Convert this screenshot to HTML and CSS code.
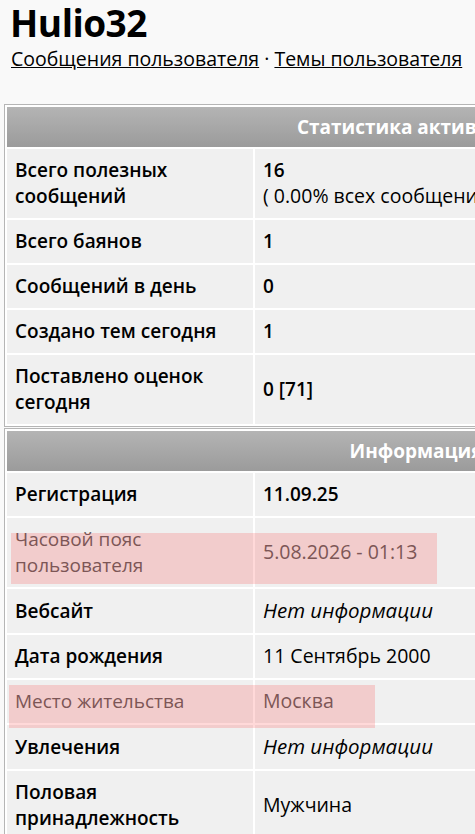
FILE: index.html
```html
<!DOCTYPE html>
<html lang="ru">
<head>
<meta charset="utf-8">
<title>Hulio32</title>
<link rel="stylesheet" href="styles.css">
</head>
<body>
<div class="page">
  <h1 class="nick">Hulio32</h1>
  <div class="links"><a href="#">Сообщения пользователя</a> · <a href="#">Темы пользователя</a></div>

  <div class="tables">
    <table class="ptable">
      <tr><th colspan="2">Статистика активности</th></tr>
      <tr><td class="lbl">Всего полезных сообщений</td><td class="val"><b>16</b><br>( 0.00% всех сообщений )</td></tr>
      <tr><td class="lbl">Всего баянов</td><td class="val"><b>1</b></td></tr>
      <tr><td class="lbl">Сообщений в день</td><td class="val"><b>0</b></td></tr>
      <tr><td class="lbl">Создано тем сегодня</td><td class="val"><b>1</b></td></tr>
      <tr><td class="lbl">Поставлено оценок сегодня</td><td class="val"><b>0 [71]</b></td></tr>
    </table>

    <div class="info-wrap">
      <table class="ptable">
        <tr><th colspan="2">Информация</th></tr>
        <tr><td class="lbl">Регистрация</td><td class="val"><b>11.09.25</b></td></tr>
        <tr class="muted"><td class="lbl">Часовой пояс пользователя</td><td class="val">5.08.2026 - 01:13</td></tr>
        <tr><td class="lbl">Вебсайт</td><td class="val"><i>Нет информации</i></td></tr>
        <tr><td class="lbl">Дата рождения</td><td class="val">11 Сентябрь 2000</td></tr>
        <tr class="muted"><td class="lbl">Место жительства</td><td class="val">Москва</td></tr>
        <tr><td class="lbl">Увлечения</td><td class="val"><i>Нет информации</i></td></tr>
        <tr><td class="lbl">Половая принадлежность</td><td class="val">Мужчина</td></tr>
      </table>
      <div class="mark mark-tz"></div>
      <div class="mark mark-city"></div>
    </div>
  </div>
</div>
</body>
</html>
```

FILE: styles.css
```css
html, body {
  margin: 0;
  padding: 0;
  background: #f9f9f9;
  overflow-x: hidden;
}
.page {
  font-family: "Open Sans", "Noto Sans", sans-serif;
  color: #000;
  padding: 0 0 0 4px;
  width: 900px;
}
.nick {
  margin: 0 0 0 6px;
  font-size: 37px;
  line-height: 46px;
  font-weight: 700;
  letter-spacing: -0.5px;
}
.links {
  margin: 0 0 0 7px;
  font-size: 19.5px;
  line-height: 26px;
}
.links a {
  color: #000;
  text-decoration: underline;
}
.tables {
  margin-top: 32px;
  display: flex;
  flex-direction: column;
  gap: 1px;
}
.ptable {
  width: 824px;
  border: 1px solid #b5b5b5;
  border-spacing: 2px;
  background: #fff;
  font-size: 19.5px;
  line-height: 26px;
}
.ptable th {
  height: 40px;
  padding: 0;
  background: linear-gradient(#b4b4b4, #9b9b9b);
  color: #fff;
  font-size: 19px;
  font-weight: 700;
  text-align: center;
}
.ptable td {
  background: #f0f0f0;
  padding: 8px 8px 9px;
  vertical-align: middle;
}
.lbl {
  width: 230px;
  font-size: 19px;
  font-weight: 600;
}
.val b {
  font-weight: 600;
  font-size: 19px;
}
.val i {
  font-size: 20.5px;
}
.muted td {
  color: #666;
  font-weight: 400;
}
.info-wrap {
  position: relative;
}
.mark {
  position: absolute;
  background: rgba(255, 0, 0, 0.15);
}
.mark-tz {
  left: 7px;
  top: 105px;
  width: 426px;
  height: 51px;
}
.mark-city {
  left: 5px;
  top: 257px;
  width: 366px;
  height: 43px;
}
```
